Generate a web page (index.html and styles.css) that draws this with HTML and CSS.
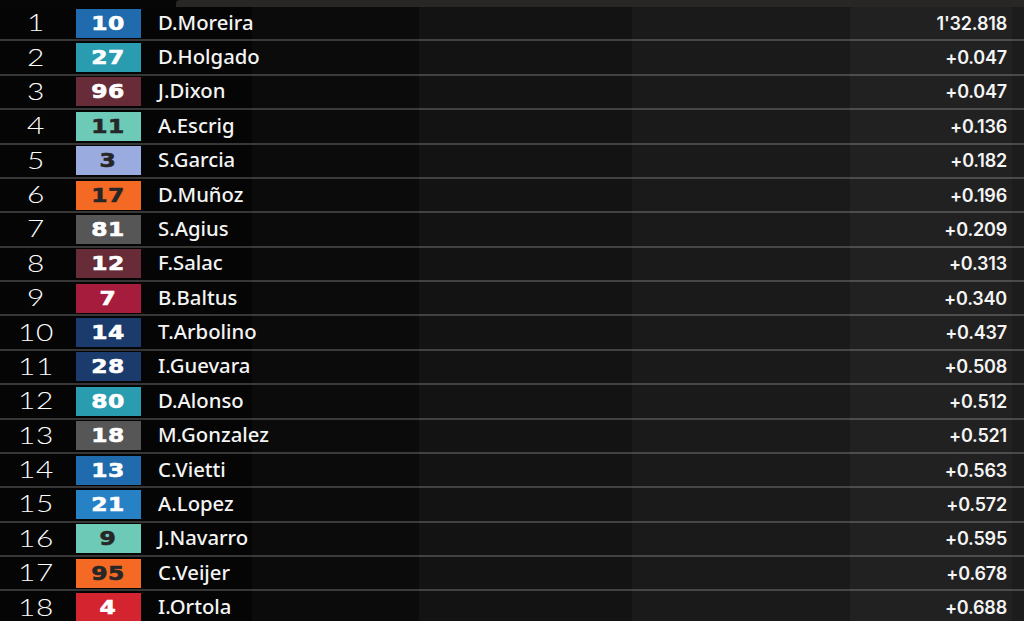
FILE: index.html
```html
<!DOCTYPE html>
<html lang="en">
<head>
<meta charset="utf-8">
<title>Classification</title>
<link rel="stylesheet" href="styles.css">
</head>
<body>
<div class="screen">
  <div class="topbar"><div class="topbar-left"></div><div class="topbar-right"></div></div>
  <div class="table">
    <div class="row"><span class="pos">1</span><span class="badge c-blue"><b>10</b></span><span class="name">D.Moreira</span><span class="time">1'32.818</span></div>
    <div class="row"><span class="pos">2</span><span class="badge c-teal"><b>27</b></span><span class="name">D.Holgado</span><span class="time">+0.047</span></div>
    <div class="row"><span class="pos">3</span><span class="badge c-maroon"><b>96</b></span><span class="name">J.Dixon</span><span class="time">+0.047</span></div>
    <div class="row"><span class="pos">4</span><span class="badge c-mint dark"><b>11</b></span><span class="name">A.Escrig</span><span class="time">+0.136</span></div>
    <div class="row"><span class="pos">5</span><span class="badge c-lav dark"><b>3</b></span><span class="name">S.Garcia</span><span class="time">+0.182</span></div>
    <div class="row"><span class="pos">6</span><span class="badge c-orange dark"><b>17</b></span><span class="name">D.Muñoz</span><span class="time">+0.196</span></div>
    <div class="row"><span class="pos">7</span><span class="badge c-grey"><b>81</b></span><span class="name">S.Agius</span><span class="time">+0.209</span></div>
    <div class="row"><span class="pos">8</span><span class="badge c-maroon"><b>12</b></span><span class="name">F.Salac</span><span class="time">+0.313</span></div>
    <div class="row"><span class="pos">9</span><span class="badge c-crimson"><b>7</b></span><span class="name">B.Baltus</span><span class="time">+0.340</span></div>
    <div class="row"><span class="pos">10</span><span class="badge c-navy"><b>14</b></span><span class="name">T.Arbolino</span><span class="time">+0.437</span></div>
    <div class="row"><span class="pos">11</span><span class="badge c-navy"><b>28</b></span><span class="name">I.Guevara</span><span class="time">+0.508</span></div>
    <div class="row"><span class="pos">12</span><span class="badge c-teal"><b>80</b></span><span class="name">D.Alonso</span><span class="time">+0.512</span></div>
    <div class="row"><span class="pos">13</span><span class="badge c-grey"><b>18</b></span><span class="name">M.Gonzalez</span><span class="time">+0.521</span></div>
    <div class="row"><span class="pos">14</span><span class="badge c-blue"><b>13</b></span><span class="name">C.Vietti</span><span class="time">+0.563</span></div>
    <div class="row"><span class="pos">15</span><span class="badge c-sky"><b>21</b></span><span class="name">A.Lopez</span><span class="time">+0.572</span></div>
    <div class="row"><span class="pos">16</span><span class="badge c-mint dark"><b>9</b></span><span class="name">J.Navarro</span><span class="time">+0.595</span></div>
    <div class="row"><span class="pos">17</span><span class="badge c-orange dark"><b>95</b></span><span class="name">C.Veijer</span><span class="time">+0.678</span></div>
    <div class="row"><span class="pos">18</span><span class="badge c-red"><b>4</b></span><span class="name">I.Ortola</span><span class="time">+0.688</span></div>
  </div>
</div>
</body>
</html>
```

FILE: styles.css
```css
* { box-sizing: border-box; }
html, body { margin: 0; padding: 0; background: #050505; }
body { width: 1024px; height: 621px; overflow: hidden; }

.screen { width: 1024px; height: 621px; overflow: hidden; }

.topbar { display: flex; height: 7px; }
.topbar-left { width: 176px; background: #060606; }
.topbar-right { flex: 1; background: #292725; border-top-left-radius: 4px; }

.table {
  background: linear-gradient(to right,
    #050505 0, #050505 252px,
    #0b0b0b 252px, #0b0b0b 419px,
    #131313 419px, #131313 632px,
    #1a1a1a 632px, #1a1a1a 850px,
    #212121 850px, #212121 1012px,
    #1c1c1c 1012px, #1c1c1c 1024px);
}

.row {
  display: flex;
  align-items: center;
  height: 34.375px;
  border-bottom: 2px solid rgba(255, 255, 255, 0.2);
  color: #fff;
}

.pos {
  width: 72px;
  text-align: center;
  font-family: Lato, "DejaVu Sans", sans-serif;
  font-weight: 300;
  font-size: 23px;
  transform: scaleX(1.3);
  letter-spacing: 0.5px;
  margin-right: 4px;
  padding-bottom: 2px;
}

.badge {
  width: 65px;
  height: 29px;
  display: flex;
  align-items: center;
  justify-content: center;
  color: #fff;
  margin-right: 17px;
}
.badge b {
  display: block;
  font-family: "DejaVu Sans", sans-serif;
  font-weight: 700;
  font-size: 19.5px;
  letter-spacing: 0.5px;
  transform: scaleX(1.2);
  -webkit-text-stroke: 0.6px currentColor;
}
.badge.dark { color: #262626; }

.c-blue { background: #1f6bad; }
.c-sky { background: #2782c5; }
.c-teal { background: #2a9cb0; }
.c-maroon { background: #672c38; }
.c-mint { background: #6dcab7; }
.c-lav { background: #9aabe0; }
.c-orange { background: #f46a25; }
.c-grey { background: #565656; }
.c-crimson { background: #a51c3c; }
.c-navy { background: #1c3b6d; }
.c-red { background: #d42430; }

.name {
  flex: 1;
  font-family: "Noto Sans", sans-serif;
  font-weight: 500;
  font-size: 20.3px;
  color: #f4f4f4;
  padding-bottom: 3px;
}

.time {
  padding-right: 17px;
  font-family: Inter, "Noto Sans", sans-serif;
  font-weight: 600;
  font-size: 18px;
  color: #f4f4f4;
  letter-spacing: -0.2px;
}
```
